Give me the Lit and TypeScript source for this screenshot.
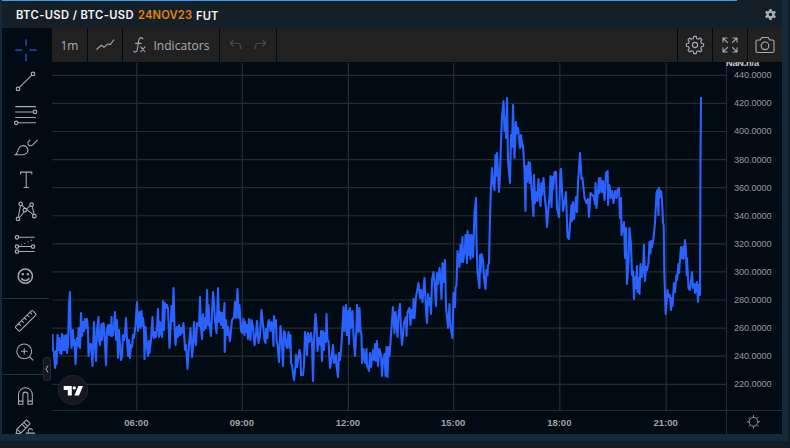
import { LitElement, html, css, svg } from "lit";
import { customElement } from "lit/decorators.js";

const SERIES = `52.5,334 53,350 54,352 55,368 56,351 56.5,364 57.5,335 58,350 59.5,338 60,353 61,340 61.5,354 62,334 63.5,350 64,336 65,350 66,335 67,353 68,345 69,305 70,292 70.5,325 71.5,348 73,330 73.5,345 74.5,340 75.5,364 77,338 78,346 78.5,328 80,348 81,313 82,336 83,322 84,331 85,319 86,328 87,319 88,330 88.5,356 90,344 91,344 92.5,366 94,322 95,345 96,361 97,330 98.5,317 99,340 100,345 101.5,324 102,340 103.5,323 104.5,333 106,365 107,330 108,325 109,335 110,325 111,336 111.5,317 112,336 113,335 114,325 115,312 116,340 117,320 118,358 119,330 121,360 122,357 123,335 124,340 125,335 126,318 127,340 128,356 129,340 130,358 131,345 132,347 133,335 134,338 135.5,325 137,302 138,331 139.5,312 140.5,328 141.5,311 142.5,326 143,318 144,328 144.5,359 145.5,327 147,347 148,356 149,341 149.5,353 151,340 152.5,317 153,335 154,338 155,332 156,337 157,327 158,309 159,337 160,322 161,333 162,337 163,301 164,330 165,303 166,308 167,305 168,309 169.5,348 171,320 171.5,306 172.5,321 173.5,288 174.5,325 175.5,345 177,327 178,337 179,325 180,335 181,328 182,333 183.5,323 184.5,340 185,350 186,345 187.5,369 189,345 190.5,328 192,357 193,346 194,322 195,340 196,345 197,323 199,326 200,297 201,328 202,339 203,314 204,330 205,318 206,328 207,290 208,325 208.5,305 209.5,325 211,336 213,292 214,304 215,320 216.5,333 218,288 219,322 220,312 221,325 222,313 223,328 224.5,303 224.7,352 226,320 227,335 228,327 230,341 231,330 232,320 234,317 235,302 236,318 237.5,289 238.5,318 239.5,305 241,330 242,333 243.5,319 244.5,335 245,322 246,332 247,325 248,339 249,319 250.5,340 251.5,320 253,327 254.5,345 256,334 257,321 258.5,343 260,335 261.5,310 263,325 264.5,340 265.5,343 266,329 267.5,338 268,323 269,320 270.5,331 271.5,322 272.5,325 273.5,346 274,316 275,328 276,320 276.5,340 277.5,345 279,362 280.5,326 282,345 283,366 284,331 285,333 286,345 287,348 288.5,332 289.5,348 290.5,335 291,363 292,365 294,380 295.5,366 296,355 297,367 298,360 299.5,350 300.5,356 301,375 303,375 304,365 305,332 306.5,342 307,355 308,333 309.5,342 311,333 312,343 313,381 314,340 315.5,314 316.5,325 317.5,351 319,338 320.5,345 321,331 322,361 323,331 324,350 325,333 326,342 326.5,314 327.5,340 328.5,341 330,368 331,363 333,345 334,363 336,355 336.5,366 338,377 339,353 340,360 341,350 342.5,328 343.5,307 344.5,331 346,305 347,335 348,311 349,344 350,308 351,328 352.5,311 353.5,335 355,356 356.5,328 357,305 358.5,332 359.5,308 360.5,330 361.5,335 362,363 363.5,349 365,363 366.5,349 367,365 369,371 370,353 371,367 373,350 374,360 375,344 376,361 377,341 378,366 379.5,349 381,355 382,376 383,361 384.5,354 385.5,376 386.5,347 387.5,377 388.5,347 389.5,356 391,335 393,307 394.5,333 395.5,312 397.5,337 398.5,315 400,304 401,330 402,345 404,323 406,317 406.5,336 407.5,312 409.5,308 410.5,325 411.5,310 413,318 413.5,299 414.5,318 416,297 418.5,283 420,298 421,290 422.5,302 424.5,278 426,310 427,323 428,294 429,305 430,298 431,314 432,280 433.5,272 434.5,282 436,306 437,273 438,284 439.5,268 440.5,280 441.5,299 442.5,263 443.5,282 445,260 446,307 448,328 449.5,304 450,323 452.5,338 453.5,293 455,307 455.5,288 456.5,285 457.5,251 459.5,267 460.5,245 461,262 462.5,237 463,262 465,248 465.5,235 467,263 467.5,231 469,255 469.5,235 470.5,259 471.5,235 473,257 474.5,213 476,198 476.5,243 477.5,272 479.5,288 480,255 480.5,273 481.5,254 483,260 484,277 485.5,289 486.5,270 487.5,275 488,266 489,263 490,217 491,187 492,168 493,182 494.5,190 495.5,155 496,176 497,153 499,192 500,174 501,142 502,117 503.5,101 504.5,131 505.5,118 506,138 507,98 508,160 510,183 511,135 512,147 513,105 514.5,158 516,122 517,133 518,128 520,148 521,135 522.5,147 523,145 524.5,170 525.5,211 526,166 527,182 528.5,162 529.5,183 530,163 531.5,187 533.5,216 534,175 535,203 536,192 537.5,201 538.5,179 540.5,206 541.5,183 542,195 543.5,178 545,200 546,208 547,227 548.5,208 549.5,197 550.5,176 551.5,207 552.5,177 553,189 554.5,172 556,172 557,208 559,217 560.5,170 561,169 563,211 564.5,203 566,192 567.5,237 569,239 571.5,205 572,221 573,202 574,219 576,197 577,212 578,183 579,169 580,153 581.5,179 582.5,178 584.5,198 586.5,203 588,199 589,217 590.5,193 594,197 595,204 595.5,183 596.5,208 599,178 599.5,193 600.5,178 602,192 603,181 604.5,200 606,173 607.7,171 608,205 609.5,185 611,198 612,191 613.5,203 615,191 616.5,198 617.5,190 619,188 620,218 621,198 621.5,235 624,222 625,258 626,228 627,284 628.5,262 629.5,228 631,245 632,275 633,271 634,299 635,277 636,288 637,266 637.5,292 638.5,278 639.5,294 640.5,264 642,277 643,268 644,245 645,281 646,267 647,270 648.5,263 649.5,242 650.5,253 651,241 652,247 653.5,238 655,223 656.5,193 657.5,190 658.5,215 659,188 660,197 661,191 662,200 663,223 663.7,225 664.3,273 665.7,314 667.5,290 668.5,297 670,295 671,310 671.7,298 672.5,306 674,283 675,292 676.5,275 677,280 678.5,264 679,273 681,247 682,258 683,247 683.5,259 685,240 685.7,247 686.7,275 687,258 688.5,288 690,290 692,272 693,288 694.5,284 695,293 697,282 698,302 699,285 700,295 700.5,160 701,97`;

const GRID_X = [136.8, 242.3, 348.4, 453.7, 559.8, 666.2];
const TIMES = ["06:00", "09:00", "12:00", "15:00", "18:00", "21:00"];
const PRICES = [440, 420, 400, 380, 360, 340, 320, 300, 280, 260, 240, 220];
const priceY = (p: number) => 75.3 + (440 - p) * 1.4045;

const dot = (x: number, y: number) => svg`<circle class="dot" cx=${x} cy=${y} r="1.75"/>`;

const TOOLS = [
  svg`<path class="cross" d="M16 5v6.7M16 19.3V27M5.3 16h6.9M19.5 16h7.2"/>`,
  svg`<path d="M9.2 21.5 21.8 9"/>${dot(8, 22.8)}${dot(23, 7.8)}`,
  svg`<path d="M5.3 7.5H26M5.3 12.8h18M5.3 18.4H26M7.5 23.7H26"/>${dot(25, 12.8)}${dot(6.2, 23.7)}`,
  svg`<path d="M5.4 23.6c2-1.2 2-3.3 3-5.6 1.4-3.4 5.2-4.6 8-2.3 2.8 2.4 1.7 7.9-4 7.9zM20.2 8.800l-2.300 2.600c-.4 2.700 2.200 4.300 4.800 2.400l5-5"/>`,
  svg`<path d="M10.6 11.3V9h11.2v2.3M16.2 9v15.3M13.6 24.3h5.2"/>`,
  svg`<path d="m8.4 22 2-11.5M11.8 10.3 24 20.2M16.5 14l3.8-3.4M22.1 11l2 8.2M9.3 22.6l5-6"/>${dot(10.7, 8.8)}${dot(21.7, 9.4)}${dot(14.8, 15)}${dot(8, 23.8)}${dot(24.3, 21)}`,
  svg`<path d="M9 9.2h15.7M9 18.4h12.4M9 23.4h15.7"/><path class="dots" d="m11 17 13-6"/>${dot(7, 9.2)}${dot(7, 18.4)}${dot(7, 23.4)}${dot(23, 18.4)}`,
  svg`<circle class="bold" cx="15.3" cy="16" r="7.1"/><circle class="fill" cx="12.8" cy="14" r="1.2"/><circle class="fill" cx="17.9" cy="14" r="1.2"/><path class="bold" d="M11.5 17.8c1.3 3.3 6.3 3.3 7.6 0"/>`,
];
const MEASURE = [
  svg`<path d="M5.8 22.2 21.3 6.7q.8-.8 1.6 0l2.8 2.8q.8.8 0 1.6L10.2 26.6q-.8.8-1.6 0l-2.8-2.8q-.8-.8 0-1.6zM8.8 19.3l2.1 2.1M11.6 16.5l2.1 2.1M14.4 13.7l2.1 2.1M17.2 10.9l2.1 2.1M20 8.1l2.1 2.1"/>`,
  svg`<circle cx="14.2" cy="15.2" r="7.4"/><path d="M11 15.2h6.4M14.2 12v6.4M19.5 20.5l3.7 3.7"/>`,
];
const LOCKS = [
  svg`<path d="M8.5 24.2V14.500a6.900 6.900 0 0 1 13.800 0v9.700h-4.400V14.500a2.500 2.500 0 0 0-5 0v9.700zM8.500 21h4.400M17.900 21h4.400"/>`,
  svg`<path d="m6 21 1-5 8.6-8.6q.8-.8 1.6 0l2.3 2.3q.8.8 0 1.6L11 19.8l-5 1.2zM13.8 9.3l3.8 3.8M12 11.1l3.8 3.8M7 16l3.8 3.8M16.500 22v-2h7.800V22M18.200 20v-2.200c.3-3 4.200-3 4.300-.4"/>`,
];

const gear = (teeth: number, outer: number, inner: number) => {
  const pts: string[] = [];
  for (let i = 0; i < teeth; i++) {
    for (const [o, r] of [[-0.3, inner], [-0.19, outer], [0.19, outer], [0.3, inner]]) {
      const a = ((i + o) / teeth) * Math.PI * 2;
      pts.push(`${(r * Math.sin(a)).toFixed(2)},${(-r * Math.cos(a)).toFixed(2)}`);
    }
  }
  return pts.join(" ");
};

@customElement("tool-rail")
class ToolRail extends LitElement {
  static styles = css`
    :host { display: block; overflow: hidden; padding-top: 6px; box-sizing: border-box; }
    .group { display: flex; flex-direction: column; }
    .icon { width: 32px; height: 32.25px; margin-left: 8px; display: block; fill: none; stroke: #a9abb2; stroke-width: 1.05; }
    .dot { fill: #010b14; stroke-width: 1.2; }
    .cross { stroke: #1c41a0; stroke-width: 1.8; }
    .dots { stroke-dasharray: 1.2 2.4; }
    .bold { stroke-width: 1.5; }
    .fill { fill: #a9abb2; stroke: none; }
    .rule { height: 1px; background: #2a3037; margin: 5.6px 3px 5.4px 0; }
  `;
  group(items: unknown[]) {
    return html`<div class="group">${items.map((i) => html`<svg class="icon" viewBox="0 0 32 32">${i}</svg>`)}</div>`;
  }
  render() {
    return html`${this.group(TOOLS)}<div class="rule"></div>${this.group(MEASURE)}<div class="rule"></div>${this.group(LOCKS)}`;
  }
}

@customElement("price-chart")
class PriceChart extends LitElement {
  static styles = css`
    :host { display: block; overflow: hidden; }
    svg { display: block; width: 730px; height: 372px; }
    .grid { stroke: #2b2b2d; stroke-width: 1.2; fill: none; }
    .axis { stroke: #272d34; stroke-width: 1; fill: none; }
    .line { stroke: #2962ff; stroke-width: 2.1; stroke-linejoin: round; fill: none; }
    text { font-family: "Liberation Sans", Arial, sans-serif; fill: #96999d; }
    .price { font-size: 9.2px; }
    .last { font-weight: 700; fill: #c9cbce; }
    .time { font-size: 9.5px; font-weight: 700; text-anchor: middle; fill: #a2a4a8; }
    .sun { stroke: #8d9096; fill: none; stroke-width: 1; }
    .disc { fill: #151722; stroke: #20222d; }
    .mark { fill: #fff; }
  `;
  render() {
    return html`<svg viewBox="52 62 730 372">
      ${PRICES.map((p) => svg`<path class="grid" d="M52 ${priceY(p)}H726"/>`)}
      ${GRID_X.map((x) => svg`<path class="grid" d="M${x} 63V410"/>`)}
      <path class="axis" d="M52 410.5H782M726.5 63V434"/>
      <polyline class="line" points=${SERIES}></polyline>
      <text class="price last" x="726" y="66" textLength="33">NaN.n/a</text>
      ${PRICES.map((p) => svg`<text class="price" x="734" y=${priceY(p) + 3} textLength="37.6">${p.toFixed(4)}</text>`)}
      ${TIMES.map((t, i) => svg`<text class="time" x=${GRID_X[i] - 0.5} y="425.8">${t}</text>`)}
      <g class="sun" transform="translate(753.5 421.8)">
        <circle r="4.4"></circle>
        <path d="M0-4.2v-2.4M0 4.2v2.4M-4.2 0h-2.4M4.2 0h2.4M-3-3l-1.7-1.7M3-3l1.7-1.7M-3 3l-1.7 1.7M3 3l1.7 1.7"></path>
      </g>
      <circle class="disc" cx="73" cy="390" r="14.8"></circle>
      <path class="mark" d="M63.7 386h8.1v9.4h-4v-5.5h-4.1z"></path>
      <circle class="mark" cx="74.3" cy="387.9" r="1.7"></circle>
      <path class="mark" d="M78.4 386h4.6l-4 9.4h-4.6z"></path>
    </svg>`;
  }
}

@customElement("app-root")
class AppRoot extends LitElement {
  static styles = css`
    :host { display: flex; flex-direction: column; width: 790px; height: 448px; overflow: hidden; background: #151d24; font-family: "Open Sans", sans-serif; }
    .frame { width: 788px; height: 441px; box-sizing: border-box; border: solid #132a3a; border-width: 0 6px 7px 2px; display: flex; flex-direction: column; background: #010b14; }
    .progress { height: 1px; flex: none; background: #151f28; }
    .done { width: 735px; height: 1px; background: #3d9df0; }
    .head { height: 27px; flex: none; display: flex; align-items: center; background: #151f27; padding: 0 5px 0 14px; font: 600 11.2px Inter, sans-serif; color: #f4f4f4; }
    .head svg { margin-left: auto; width: 13px; height: 13px; fill: #adaeb0; }
    .pair { width: 122px; letter-spacing: 0.38px; white-space: nowrap; }
    .date { width: 58px; color: #e8800e; letter-spacing: 0.15px; }
    .kind { padding-top: 2px; letter-spacing: 0.15px; }
    .body { display: flex; flex: 1; min-height: 0; position: relative; }
    tool-rail { width: 50px; flex: none; }
    .main { flex: 1; display: flex; flex-direction: column; min-width: 0; }
    .bar { display: flex; gap: 1px; height: 34px; flex: none; color: #a9abb2; font-size: 12px; }
    .cell { width: 34px; background: #212121; display: flex; align-items: center; justify-content: center; }
    .cell svg { fill: none; stroke: #a9abb2; stroke-width: 1.1; }
    .first { width: 35px; }
    .ind { width: 96px; gap: 5px; letter-spacing: 0.06px; }
    .undo { width: 56px; gap: 12px; }
    .cell.undo svg { stroke: #4b4b4e; }
    .right { box-sizing: border-box; padding-right: 1px; }
    .fill { flex: 1; background: #212121; }
    .handle { position: absolute; left: 41px; top: 329px; width: 8px; height: 24px; box-sizing: border-box; border: 1px solid #272935; border-radius: 3px; background: #151722; }
    .handle svg { display: block; fill: none; stroke: #b2b5be; }
  `;
  render() {
    return html`<div class="frame">
      <div class="progress"><div class="done"></div></div>
      <div class="head">
        <span class="pair">BTC-USD / BTC-USD</span><span class="date">24NOV23</span><span class="kind">FUT</span>
        <svg viewBox="-6.5 -6.5 13 13"><path fill-rule="evenodd" d="M${gear(6, 5.7, 4.2)}zM0-1.8a1.8 1.8 0 1 0 0 3.6a1.8 1.8 0 1 0 0-3.6z"></path></svg>
      </div>
      <div class="body">
        <tool-rail></tool-rail>
        <div class="main">
          <div class="bar">
            <div class="cell first">1m</div>
            <div class="cell"><svg width="20" height="16" viewBox="0 0 20 16"><path d="m1.5 12.5 4.7-4.2 2.8 2 3.8-3.5 2.4 1 3.8-5.3"></path></svg></div>
            <div class="cell ind">
              <svg width="16" height="18" viewBox="0 0 16 18"><path d="M11 3.3C10.4 1 7.4 1 6.8 4L5.2 14c-.4 2.5-2.8 2.6-3.5.8M3.2 7.4h6.4M8.5 10.7l4.7 5.3M13.2 10.7 8.5 16"></path></svg>
              <span>Indicators</span>
            </div>
            <div class="cell undo">
              <svg width="13" height="12" viewBox="0 0 13 12"><path d="M4.5 1 1.3 4.2l3.2 3.2M1.3 4.2H8c3 0 4 2 4 5.8"></path></svg>
              <svg width="13" height="12" viewBox="0 0 13 12"><path d="m8.5 1 3.2 3.2-3.2 3.2M11.7 4.2H5c-3 0-4 2-4 5.8"></path></svg>
            </div>
            <div class="fill"></div>
            <div class="cell right"><svg width="22" height="22" viewBox="-11 -11 22 22"><polygon stroke-linejoin="round" points=${gear(8, 8.7, 6.7)}></polygon><circle r="2.6"></circle></svg></div>
            <div class="cell right"><svg width="16" height="16" viewBox="0 0 16 16"><path d="M1 5.5V1h4.5M1 1l4.8 4.8M10.5 1H15v4.5M15 1l-4.8 4.8M1 10.5V15h4.5M1 15l4.8-4.8M10.5 15H15v-4.5M15 15l-4.8-4.8"></path></svg></div>
            <div class="cell right"><svg width="20" height="18" viewBox="0 0 20 18"><path d="M2.5 4h2.8l1.4-2.5h6.6L14.7 4h2.8q1.5 0 1.5 1.5V15q0 1.5-1.5 1.5h-15Q1 16.5 1 15V5.5Q1 4 2.5 4z"></path><circle cx="10" cy="9.8" r="3.8"></circle></svg></div>
          </div>
          <price-chart></price-chart>
        </div>
        <div class="handle"><svg width="6" height="22" viewBox="0 0 6 22"><path d="M4 7.5 2 11l2 3.5"></path></svg></div>
      </div>
    </div>`;
  }
}
